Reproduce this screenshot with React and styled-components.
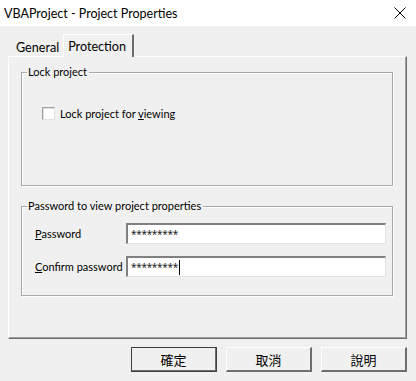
import React from 'react';
import styled, { createGlobalStyle } from 'styled-components';

const GlobalStyle = createGlobalStyle`
  html, body {
    margin: 0;
    padding: 0;
    background: #f0f0f0;
  }
  body {
    font-family: Lato, "Noto Sans CJK TC", sans-serif;
    color: #000;
  }
`;

const Window = styled.div`
  width: 416px;
  height: 381px;
  display: flex;
  flex-direction: column;
  background: #f0f0f0;
  overflow: hidden;
`;

const TitleBar = styled.div`
  height: 26px;
  flex: none;
  display: flex;
  align-items: center;
  justify-content: space-between;
  padding: 0 10px 0 4px;
  background: #fff;
  font-size: 12.5px;
`;

const CloseIcon = styled.svg`
  width: 12px;
  height: 12px;
`;

const Body = styled.div`
  flex: 1;
  display: flex;
  flex-direction: column;
  padding: 8px 9px 0 8px;
`;

const TabStrip = styled.div`
  height: 22px;
  display: flex;
  align-items: flex-end;
  padding-left: 3px;
  position: relative;
  z-index: 1;
`;

const Tab = styled.div`
  height: ${(p) => (p.$active ? '23px' : '18px')};
  margin-bottom: ${(p) => (p.$active ? '-1px' : '0')};
  display: flex;
  align-items: center;
  padding: ${(p) => (p.$active ? '0 6px 0 4px' : '0 4px 0 5px')};
  font-size: 12.6px;
  background: #f0f0f0;
  border-top: ${(p) => (p.$active ? '1px solid #fff' : 'none')};
  border-left: ${(p) => (p.$active ? '1px solid #fff' : 'none')};
  border-right: ${(p) => (p.$active ? '2px solid #6d6d6d' : 'none')};
  box-sizing: border-box;
`;

const Panel = styled.div`
  height: 283px;
  box-sizing: border-box;
  border-top: 1px solid #fff;
  border-left: 1px solid #fff;
  border-right: 1px solid #6d6d6d;
  border-bottom: 1px solid #6d6d6d;
  box-shadow: inset -1px -1px 0 #a0a0a0;
  padding: 7px 13px 0 12px;
  display: flex;
  flex-direction: column;
  gap: 12px;
`;

const Group = styled.fieldset`
  margin: 0;
  height: ${(p) => p.$height}px;
  box-sizing: border-box;
  border: 1px solid #a8a8a8;
  box-shadow: 1px 1px 0 #fff, inset 1px 1px 0 #fff;
  padding: 0 6px 0 13px;
`;

const Legend = styled.legend`
  font-size: 11px;
  padding: 0 2px 0 1px;
  margin-left: -8px;
  line-height: 16px;
`;

const CheckRow = styled.label`
  display: flex;
  align-items: center;
  gap: 5px;
  margin-top: 27px;
  margin-left: 7px;
  font-size: 11px;
`;

const CheckBox = styled.span`
  width: 13px;
  height: 13px;
  box-sizing: border-box;
  background: #fff;
  border-top: 1px solid #a0a0a0;
  border-left: 1px solid #a0a0a0;
  border-right: 1px solid #e3e3e3;
  border-bottom: 1px solid #e3e3e3;
  box-shadow: inset 1px 1px 0 #e0e0e0;
`;

const FieldGrid = styled.div`
  display: grid;
  grid-template-columns: 91px 1fr;
  row-gap: 12px;
  align-items: center;
  margin-top: 9px;
`;

const FieldLabel = styled.div`
  font-size: 11px;
  white-space: nowrap;
`;

const Input = styled.div`
  height: 21px;
  box-sizing: border-box;
  display: flex;
  align-items: center;
  padding-left: 3px;
  background: #fff;
  border-top: 2px solid #808080;
  border-left: 2px solid #808080;
  border-right: 1px solid #e3e3e3;
  border-bottom: 1px solid #e3e3e3;
  font-family: "Noto Sans", sans-serif;
  font-size: 10px;
  letter-spacing: -0.3px;
  color: #222;
`;

const Caret = styled.span`
  display: inline-block;
  width: 1px;
  height: 15px;
  margin-left: 1px;
  background: #000;
`;

const ButtonRow = styled.div`
  display: flex;
  justify-content: flex-end;
  gap: 9px;
  margin-top: 8px;
`;

const Button = styled.div`
  width: 86px;
  height: 25px;
  box-sizing: border-box;
  display: flex;
  align-items: center;
  justify-content: center;
  font-size: 13px;
  background: #f0f0f0;
  border-top: 1px solid #fff;
  border-left: 1px solid #fff;
  border-right: 2px solid #6d6d6d;
  border-bottom: 2px solid #6d6d6d;
  outline: ${(p) => (p.$default ? '1px solid #404040' : 'none')};
  outline-offset: -1px;
`;

export default function App() {
  return (
    <>
      <GlobalStyle />
      <Window>
        <TitleBar>
          <span>VBAProject - Project Properties</span>
          <CloseIcon viewBox="0 0 12 12">
            <path d="M0.5 0.5 L11.5 11.5 M11.5 0.5 L0.5 11.5" stroke="#000" strokeWidth="1" />
          </CloseIcon>
        </TitleBar>
        <Body>
          <TabStrip>
            <Tab>General</Tab>
            <Tab $active>Protection</Tab>
          </TabStrip>
          <Panel>
            <Group $height={122}>
              <Legend>Lock project</Legend>
              <CheckRow>
                <CheckBox />
                <span>
                  Lock project for <u>v</u>iewing
                </span>
              </CheckRow>
            </Group>
            <Group $height={98}>
              <Legend>Password to view project properties</Legend>
              <FieldGrid>
                <FieldLabel>
                  <u>P</u>assword
                </FieldLabel>
                <Input>*********</Input>
                <FieldLabel>
                  <u>C</u>onfirm password
                </FieldLabel>
                <Input>
                  *********
                  <Caret />
                </Input>
              </FieldGrid>
            </Group>
          </Panel>
          <ButtonRow>
            <Button $default>確定</Button>
            <Button>取消</Button>
            <Button>說明</Button>
          </ButtonRow>
        </Body>
      </Window>
    </>
  );
}
